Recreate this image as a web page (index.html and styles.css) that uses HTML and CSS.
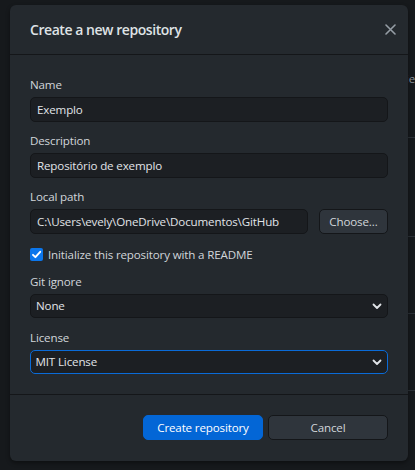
FILE: index.html
```html
<!DOCTYPE html>
<html lang="en">
<head>
<meta charset="utf-8">
<title>Create a new repository</title>
<link rel="stylesheet" href="styles.css">
</head>
<body>
<div class="app">
  <div class="pane-left"></div>
  <div class="pane-right">
    <div class="bg-row bg-row-1"><span class="bg-text">ie</span></div>
    <div class="bg-row bg-row-2"></div>
    <div class="bg-row bg-row-3"></div>
    <div class="bg-row bg-row-4"></div>
  </div>
</div>

<div class="dialog">
  <div class="dialog-header">
    <h1 class="dialog-title">Create a new repository</h1>
    <button class="close-btn" aria-label="Close">
      <svg width="11" height="11" viewBox="0 0 11 11"><path d="M1 1L10 10M10 1L1 10" stroke="#959da5" stroke-width="1.6" stroke-linecap="round"/></svg>
    </button>
  </div>
  <div class="dialog-body">
    <div class="field">
      <label class="label">Name</label>
      <div class="input">Exemplo</div>
    </div>
    <div class="field">
      <label class="label">Description</label>
      <div class="input">Repositório de exemplo</div>
    </div>
    <div class="field">
      <label class="label">Local path</label>
      <div class="path-row">
        <div class="input path-input">C:\Users\evely\OneDrive\Documentos\GitHub</div>
        <button class="btn choose-btn">Choose…</button>
      </div>
    </div>
    <div class="check-row">
      <span class="checkbox">
        <svg width="13" height="13" viewBox="0 0 13 13"><path d="M3 6.8L5.4 9.2L10.2 3.8" fill="none" stroke="#fff" stroke-width="1.9" stroke-linecap="round" stroke-linejoin="round"/></svg>
      </span>
      <span class="check-label">Initialize this repository with a README</span>
    </div>
    <div class="field field-select">
      <label class="label">Git ignore</label>
      <div class="select">None<svg class="chev" width="10" height="7" viewBox="0 0 10 7"><path d="M1.5 1.5L5 5L8.5 1.5" fill="none" stroke="#e1e4e8" stroke-width="1.8" stroke-linecap="round" stroke-linejoin="round"/></svg></div>
    </div>
    <div class="field">
      <label class="label">License</label>
      <div class="select select-focus">MIT License<svg class="chev" width="10" height="7" viewBox="0 0 10 7"><path d="M1.5 1.5L5 5L8.5 1.5" fill="none" stroke="#e1e4e8" stroke-width="1.8" stroke-linecap="round" stroke-linejoin="round"/></svg></div>
    </div>
  </div>
  <div class="dialog-footer">
    <button class="btn btn-primary">Create repository</button>
    <button class="btn btn-secondary">Cancel</button>
  </div>
</div>
</body>
</html>
```
FILE: styles.css
```css
* { box-sizing: border-box; }
html, body {
  margin: 0;
  padding: 0;
  width: 415px;
  height: 470px;
  overflow: hidden;
  background: #16191c;
  font-family: "Open Sans", "Noto Sans", sans-serif;
  font-size: 11.6px;
  letter-spacing: -0.15px;
  color: #d1d5da;
}
.app {
  display: flex;
  height: 470px;
}
.pane-left {
  width: 401px;
  background: #16191c;
}
.pane-right {
  flex: 1;
  background: #16191c;
  display: flex;
  flex-direction: column;
}
.bg-row {
  border-bottom: 1px solid #2b3036;
  padding-left: 8px;
}
.bg-row-1 { height: 138px; padding-top: 71px; }
.bg-row-2 { height: 99px; }
.bg-row-3 { height: 77px; }
.bg-row-4 { height: 77px; }
.bg-text {
  color: #8b929a;
  white-space: nowrap;
}

.dialog {
  position: absolute;
  left: 10px;
  top: 5px;
  width: 398px;
  height: 456px;
  background: #24292e;
  border-radius: 6px;
  display: flex;
  flex-direction: column;
  box-shadow: 0 2px 4px rgba(0,0,0,0.4);
}
.dialog-header {
  height: 50px;
  display: flex;
  align-items: center;
  justify-content: space-between;
  padding: 0 11px 0 20px;
  border-bottom: 1px solid #141619;
  flex: none;
}
.dialog-title {
  margin: 0;
  font-size: 14px;
  font-weight: 600;
  color: #dfe2e5;
  letter-spacing: -0.45px;
  padding-bottom: 1px;
}
.close-btn {
  background: none;
  border: 0;
  padding: 0;
  width: 14px;
  height: 14px;
  display: flex;
  align-items: center;
  justify-content: center;
  margin-bottom: 0;
}
.dialog-body {
  padding: 22px 20px 20px;
  border-bottom: 1px solid #141619;
  flex: none;
}
.field {
  display: flex;
  flex-direction: column;
  margin-bottom: 11px;
}
.field-select { margin-bottom: 12px; }
.field:last-child { margin-bottom: 0; }
.label {
  line-height: 16px;
  margin-bottom: 4px;
  color: #d1d5da;
}
.input, .select {
  height: 25px;
  line-height: 23px;
  background: #1c1f23;
  border: 1px solid #141619;
  border-radius: 5px;
  padding: 0 6px;
  color: #e1e4e8;
  white-space: nowrap;
  overflow: hidden;
}
.select {
  height: 24px;
  line-height: 22px;
  padding-left: 5px;
  display: flex;
  align-items: center;
  justify-content: space-between;
  padding-right: 5px;
}
.select-focus {
  border: 1.5px solid #0a6bd8;
  padding-left: 4.5px;
}
.chev { flex: none; }
.path-row {
  display: flex;
  gap: 11px;
}
.path-input { flex: 1; }
.btn {
  font-family: inherit;
  font-size: 11.6px;
  letter-spacing: -0.15px;
  border-radius: 5px;
  height: 25px;
  padding: 0;
  cursor: default;
}
.choose-btn {
  width: 69px;
  background: #2f353c;
  border: 1px solid #141619;
  color: #d1d5da;
  flex: none;
}
.check-row {
  display: flex;
  align-items: center;
  gap: 5px;
  height: 16px;
  margin: 12px 0 12px;
}
.checkbox {
  width: 13px;
  height: 13px;
  border-radius: 2px;
  background: #0b76ec;
  display: flex;
}
.check-label { color: #d1d5da; }
.dialog-footer {
  flex: 1;
  display: flex;
  justify-content: flex-end;
  align-items: flex-start;
  gap: 5px;
  padding: 20px 20px 0;
}
.btn-primary {
  width: 120px;
  background: #0366d6;
  border: 1px solid #0366d6;
  color: #ffffff;
}
.btn-secondary {
  width: 120px;
  background: #2f353c;
  border: 1px solid #141619;
  color: #d1d5da;
}
```
